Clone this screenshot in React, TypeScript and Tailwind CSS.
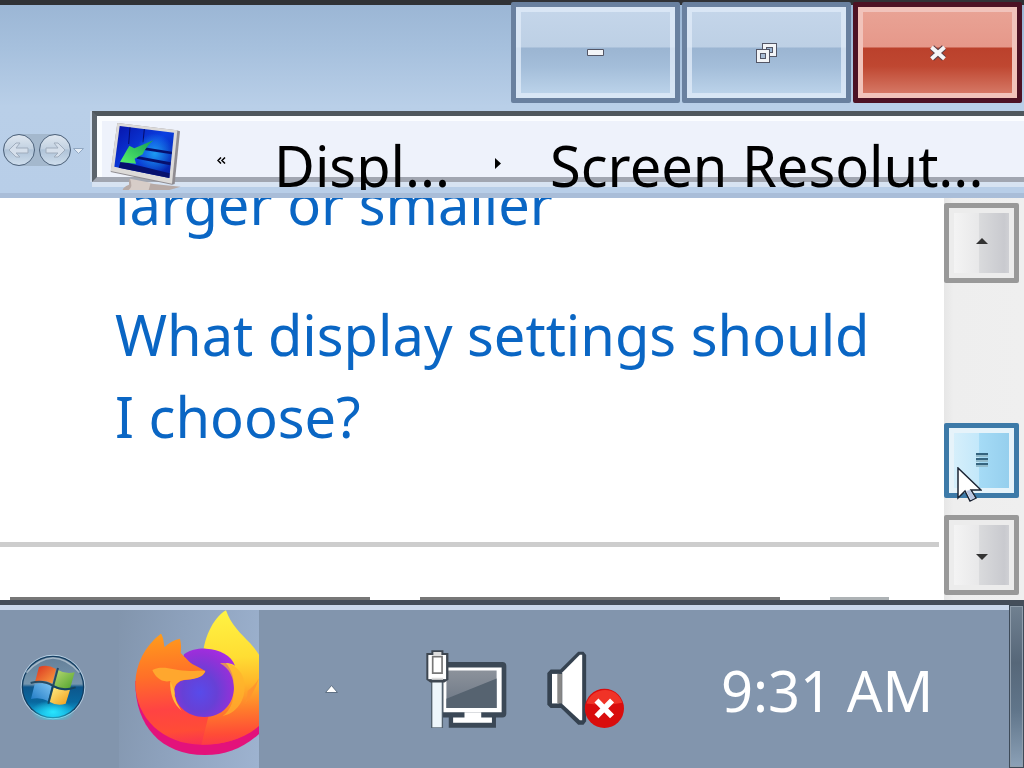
import type { ReactNode } from "react";

function CaptionButton({ label, close, children }: { label: string; close?: boolean; children: ReactNode }) {
  const look = close
    ? "border-[#4d1224] bg-[linear-gradient(#e9a496_0%,#e6988a_44%,#bb412c_45%,#bf4731_65%,#d9806e_100%)] shadow-[inset_0_0_0_5px_#f1c3bb]"
    : "border-[#69809f] bg-[linear-gradient(#c5d6ea_0%,#bdd0e5_44%,#9bb5d2_45%,#a3bdd9_65%,#bfd6ec_100%)] shadow-[inset_0_0_0_5px_rgba(222,234,247,0.8)]";
  return (
    <button
      type="button"
      aria-label={label}
      className={`flex h-[101px] w-[169px] items-center justify-center rounded-[2px] border-[5px] ${look}`}
    >
      {children}
    </button>
  );
}

function ScrollButton({ label, children }: { label: string; children: ReactNode }) {
  return (
    <button
      type="button"
      aria-label={label}
      className="flex h-20 w-[75px] shrink-0 items-center justify-center rounded-[2px] border-[5px] border-[#999] bg-[linear-gradient(90deg,#f6f6f6_0%,#e8e8e9_46%,#d9dadc_47%,#c9cacf_85%,#d6d7da_100%)] shadow-[inset_0_0_0_5px_#ececec]"
    >
      {children}
    </button>
  );
}

function MonitorIcon() {
  return (
    <svg viewBox="328 98 216 204" className="h-[68px] w-[72px] shrink-0" aria-hidden="true">
      <defs>
        <linearGradient id="screen" x1="0" y1="0" x2="1" y2="1">
          <stop offset="0" stopColor="#0712a8" />
          <stop offset="0.5" stopColor="#0a3fe0" />
          <stop offset="1" stopColor="#041c9c" />
        </linearGradient>
        <radialGradient id="glow">
          <stop offset="0" stopColor="#1d9cf2" />
          <stop offset="1" stopColor="#1d9cf2" stopOpacity="0" />
        </radialGradient>
        <linearGradient id="arrow" x1="1" y1="0" x2="0" y2="1">
          <stop offset="0" stopColor="#169a56" />
          <stop offset="1" stopColor="#57f56a" />
        </linearGradient>
      </defs>
      <path d="M385 270l75 14 80 8-34 10H366q0-8 19-16z" fill="#b7aaa6" />
      <path d="M388 268l62 12-6 22h-60q14-10 4-34z" fill="#d7cdc8" />
      <path d="M350 101l178 22 10 3-16 158-8 2-184-38z" fill="#8f8c91" />
      <path d="M350 101l180 22-16 160-184-38z" fill="#dcdad8" />
      <path d="M357 110l163 20-14 136-165-34z" fill="url(#screen)" />
      <path d="M388 114l-4 50M431 119l-4 40" stroke="#050c6c" strokeWidth="3" />
      <ellipse cx="462" cy="192" rx="56" ry="60" fill="url(#glow)" />
      <path d="M430 174l84 13-1 8-98-15zM412 201l98 18-1 9-101-20zM360 216l147 36-1 14-152-31z" fill="#06106e" />
      <path d="M458 153l-57 24-15-8-28 49 48 5-4-15 24-13q8-20 32-42z" fill="url(#arrow)" />
    </svg>
  );
}

function StartOrb() {
  return (
    <svg viewBox="61 186 196 198" className="h-[66px] w-[66px]" aria-hidden="true">
      <defs>
        <linearGradient id="orb" x1="0" y1="0" x2="0" y2="1">
          <stop offset="0" stopColor="#647f98" />
          <stop offset="0.45" stopColor="#7696ae" />
          <stop offset="0.5" stopColor="#0d568c" />
          <stop offset="0.75" stopColor="#08689f" />
          <stop offset="1" stopColor="#12b8ea" />
        </linearGradient>
        <radialGradient id="orbGlow">
          <stop offset="0" stopColor="#28e6ff" />
          <stop offset="1" stopColor="#28e6ff" stopOpacity="0" />
        </radialGradient>
        <linearGradient id="red" x1="0" y1="0" x2="1" y2="1">
          <stop offset="0" stopColor="#d92f20" />
          <stop offset="1" stopColor="#fba441" />
        </linearGradient>
        <linearGradient id="green" x1="0" y1="0" x2="1" y2="1">
          <stop offset="0" stopColor="#b9da74" />
          <stop offset="1" stopColor="#4fa22b" />
        </linearGradient>
        <linearGradient id="blue" x1="1" y1="0" x2="0" y2="1">
          <stop offset="0" stopColor="#7fc4f2" />
          <stop offset="1" stopColor="#1e79c4" />
        </linearGradient>
        <linearGradient id="yellow" x1="0" y1="0" x2="1" y2="1">
          <stop offset="0" stopColor="#fff08a" />
          <stop offset="1" stopColor="#f19b16" />
        </linearGradient>
      </defs>
      <circle cx="159" cy="285" r="97" fill="#b7cfe3" />
      <circle cx="159" cy="285" r="94" fill="#123d61" />
      <circle cx="159" cy="285" r="90" fill="url(#orb)" />
      <ellipse cx="159" cy="360" rx="66" ry="36" fill="url(#orbGlow)" />
      <path d="M79 242q80-88 160 0" fill="none" stroke="#cddbe5" strokeWidth="5" opacity="0.6" />
      <path d="M117 225q24-10 51 6l-11 44q-22-14-52-5z" fill="url(#red)" />
      <path d="M174 234q24 14 50 7l-13 46q-26 8-49-7z" fill="url(#green)" />
      <path d="M104 277q30-8 51 5l-11 45q-24-13-51-6z" fill="url(#blue)" />
      <path d="M160 286q24 13 50 7l-13 42q-26 8-49-6z" fill="url(#yellow)" />
      <path d="M92 273q37-10 66 8t69 5M174 228l-29 107" fill="none" stroke="#173f59" strokeWidth="6" opacity="0.85" />
    </svg>
  );
}

function FirefoxLogo() {
  return (
    <svg viewBox="75 57 372 438" className="h-[146px] w-[124px]" aria-hidden="true">
      <defs>
        <linearGradient id="body" gradientUnits="userSpaceOnUse" x1="200" y1="130" x2="230" y2="470">
          <stop offset="0" stopColor="#ff9a1c" />
          <stop offset="0.35" stopColor="#ff7028" />
          <stop offset="0.65" stopColor="#ff4343" />
          <stop offset="0.85" stopColor="#ff4c36" />
          <stop offset="1" stopColor="#f92d55" />
        </linearGradient>
        <radialGradient id="globe" cx="0.42" cy="0.64" r="0.7">
          <stop offset="0" stopColor="#584bea" />
          <stop offset="0.4" stopColor="#6740d6" />
          <stop offset="0.8" stopColor="#9530d8" />
          <stop offset="1" stopColor="#a82be4" />
        </radialGradient>
        <linearGradient id="flame" gradientUnits="userSpaceOnUse" x1="350" y1="60" x2="370" y2="460">
          <stop offset="0" stopColor="#fff343" />
          <stop offset="0.35" stopColor="#ffdd33" />
          <stop offset="0.55" stopColor="#ffb52a" />
          <stop offset="0.75" stopColor="#ff7a2c" />
          <stop offset="0.92" stopColor="#ff4c36" />
          <stop offset="1" stopColor="#fb3a48" />
        </linearGradient>
      </defs>
      <path d="M76 270C74 400 150 492 285 492c70 0 124-24 180-80V290z" fill="#e3127b" />
      <path d="M153 128C104 164 77 220 76 277c0 104 84 184 198 184 72 0 132-18 190-72V300H200z" fill="url(#body)" />
      <path d="M348 58c14 42 44 70 72 98 20 22 34 44 46 72v160c-50 50-112 73-192 73l20-80 60-160-75-9c-4-54 26-130 69-154z" fill="url(#flame)" />
      <path d="M447 262q-14 44-42 78 8-22 8-40 20-14 34-38z" fill="#ff9130" opacity="0.8" />
      <path d="M222 190c20-14 44-18 66-17 42 2 76 20 87 51-8-5-16-8-28-8 17 18 25 43 25 72 0 53-37 90-89 90-53 0-91-37-91-84 0-28 6-40 20-54z" fill="url(#globe)" />
      <path d="M153 128c8 12 9 26 8 43 14-15 30-24 49-28 4 16 4 30 2 43 14 13 26 29 42 37 12 7 24 11 32 18-6 12-19 17-32 21-22 7-38 2-50 14-14 11-17 29-5 49-28-16-38-70-74-70-20-10-38-70 28-127z" fill="url(#body)" />
      <path d="M127 237c20-10 43-7 65-2 32 7 58 4 94 4-4 15-18 20-34 24-24 5-40 0-53 16-7 9-8 20-3 34-11-12-16-25-15-43-28 6-45-13-54-33z" fill="#ffa72e" />
      <path d="M181 271c-2 38 10 70 34 88-15-22-22-38-22-60z" fill="#ffbd3a" />
      <path d="M330 217c34-5 72 20 74 66 2 46-24 84-66 92 24-18 35-48 34-82-1-32-12-60-42-76z" fill="#ffb42c" opacity="0.7" />
    </svg>
  );
}

function NetworkIcon() {
  return (
    <svg viewBox="77 56 242 236" className="h-[79px] w-[81px]" aria-hidden="true">
      <defs>
        <linearGradient id="lcd" x1="0" y1="0" x2="0" y2="1">
          <stop offset="0" stopColor="#8c929b" />
          <stop offset="1" stopColor="#6b7684" />
        </linearGradient>
      </defs>
      <path d="M126 96q0-4 5-4h174q12 0 12 12v142q0 12-12 12h-19v30H145v-30h-19z" fill="#3b4856" />
      <path d="M129 108h174v134H129z" fill="#fff" />
      <path d="M138 117h150v112H138z" fill="url(#lcd)" />
      <path d="M138 202l150-61v88H138z" fill="#566370" />
      <path d="M192 242h50v16h32v15H158v-15h34z" fill="#fff" />
      <path d="M92 145h36v144H92z" fill="#52606d" />
      <path d="M96 145h28v142H96z" fill="#eef6fb" />
      <path d="M93 57h36v8h15v80l-12 8H90l-12-8V65h15z" fill="#3e4751" />
      <path d="M84 71h53v72H84z" fill="#fff" />
      <path d="M97 76h28v49H97z" fill="#fff" stroke="#777" strokeWidth="5" />
      <path d="M99 62h24v11H99zM94 139h34v6H94z" fill="#dedede" />
    </svg>
  );
}

function VolumeMutedIcon() {
  return (
    <svg viewBox="438 61 232 238" className="h-[79px] w-[77px]" aria-hidden="true">
      <path d="M439 130l10-10h29l54-54h16l8 10v200l-8 10h-16l-52-50h-31l-10-10z" fill="#354250" />
      <path d="M453 133h20v89h-20z" fill="#fff" />
      <path d="M469 133h14v89h-14z" fill="#888" />
      <path d="M484 129l53-54h7v198h-7l-53-49z" fill="#fff" />
      <circle cx="611" cy="237" r="59" fill="#d90d0d" />
      <path d="M557 222c15-50 90-58 108-2l-52 8z" fill="#ff4c38" opacity="0.6" />
      <path d="M587 213l47 48M634 213l-47 48" stroke="#fff" strokeWidth="17" />
    </svg>
  );
}

export default function App() {
  return (
    <div className="flex h-screen min-h-[600px] flex-col overflow-hidden bg-white font-['Noto_Sans','Open_Sans',sans-serif] text-[56px] leading-[82px]">
      {/* Window frame */}
      <header className="relative z-10 shrink-0 border-b-[5px] border-[#a9bdd8] bg-[linear-gradient(#9ab5d4_0%,#a6c0dd_25%,#b9cfe8_55%,#b8cee8_100%)]">
        <div className="h-[5px] bg-[#303236]" />
        <div className="-mt-[3px] flex justify-end gap-[2px] pr-[2px]">
          <CaptionButton label="Minimize">
            <svg viewBox="0 0 17 7" className="h-[7px] w-[17px]" aria-hidden="true">
              <path d="M.5.5h16v6H.5z" fill="#f2f4f7" stroke="#535666" />
            </svg>
          </CaptionButton>
          <CaptionButton label="Restore Down">
            <svg viewBox="0 0 21 20" className="h-5 w-[21px]" fill="none" aria-hidden="true">
              <path d="M8.500 2.500h10v9h-10z" stroke="#535666" strokeWidth="5" />
              <path d="M8.500 2.500h10v9h-10z" stroke="#f2f4f7" strokeWidth="3" />
              <path d="M2.500 8.500h9v9h-9z" fill="#a9bdd5" stroke="#535666" strokeWidth="5" />
              <path d="M2.500 8.500h9v9h-9z" stroke="#f2f4f7" strokeWidth="3" />
            </svg>
          </CaptionButton>
          <CaptionButton label="Close" close>
            <svg viewBox="0 0 18 16" className="h-4 w-[18px]" fill="none" aria-hidden="true">
              <path d="M3 2.500l12 11M15 2.500l-12 11" stroke="#5d4149" strokeWidth="6" />
              <path d="M4 3.500l10 9M14 3.500l-10 9" stroke="#f5f5f7" strokeWidth="4" strokeLinecap="square" />
            </svg>
          </CaptionButton>
        </div>

        <div className="flex h-[90px] pt-2">
          <div className="flex w-[92px] shrink-0 items-start pt-[23px] pl-[3px]">
            <div className="flex gap-1 rounded-full bg-[#a4b8cd]">
              {["Back", "Forward"].map((label) => (
                <button
                  key={label}
                  type="button"
                  aria-label={label}
                  className="flex size-8 items-center justify-center rounded-full border border-[#4e637c] bg-[linear-gradient(#dfe7f0_0%,#c3d2e2_45%,#afc3d8_50%,#cfdeed_100%)]"
                >
                  <svg viewBox="0 0 22 18" className={`h-[18px] w-[22px] ${label === "Forward" ? "-scale-x-100" : ""}`} aria-hidden="true">
                    <path d="M1 9l7-7h4L8 7h12v5H8l4 4H8z" fill="#d5dfeb" stroke="#a0adbd" />
                  </svg>
                </button>
              ))}
            </div>
            <button type="button" aria-label="Recent pages" className="mt-[14px] ml-[2px]">
              <svg viewBox="0 0 11 6" className="h-[6px] w-[11px]" aria-hidden="true">
                <path d="M.5.5h10l-5 5z" fill="#e4edf7" stroke="#92a8c2" />
              </svg>
            </button>
          </div>

          <div className="h-[71px] min-w-0 flex-1 border-y-[5px] border-l-[5px] border-t-[#50585e] border-b-[#a1a6b1] border-l-[#5c646c] bg-[#eef2fb] shadow-[inset_5px_5px_0_#fbfdff,0_5px_0_#d7e3f2,-2px_0_0_#cedced]">
            <nav aria-label="Address" className="flex h-[74px] overflow-hidden whitespace-nowrap text-black">
              <div className="w-[177px] shrink-0 pt-[6px] pl-[13px]">
                <div className="flex items-center">
                  <MonitorIcon />
                  <button type="button" aria-label="Previous locations" className="ml-[35px] pt-2">
                    <svg viewBox="0 0 9 7" className="h-[7px] w-[9px]" aria-hidden="true">
                      <path d="M4 .5l-3 3 3 3M8 .5l-3 3 3 3" fill="none" stroke="#000" strokeWidth="1.5" />
                    </svg>
                  </button>
                </div>
              </div>
              <a href="#display" className="w-[221px] shrink-0 pt-2">
                Displ...
              </a>
              <svg viewBox="0 0 6 11" className="mt-[42px] h-[11px] w-[6px] shrink-0" aria-hidden="true">
                <path d="M0 0l6 5.500L0 11z" />
              </svg>
              <a href="#resolution" className="ml-[49px] pt-2">
                Screen Resolut...
              </a>
            </nav>
          </div>
        </div>
      </header>

      <main className="flex min-h-0 flex-1">
        <div className="min-w-0 flex-1 overflow-hidden pr-[5px] text-[#0a66c4]">
          <a href="#text-size" className="-mt-9 block pl-[115px]">
            larger or smaller
          </a>
          <a href="#settings" className="mt-[49px] block max-w-[900px] pl-[115px]">
            What display settings should I&nbsp;choose?
          </a>
          <div className="mt-[85px] h-[5px] bg-[#cdcdcd]" />
          <div className="mt-[50px] flex gap-[50px] pl-[10px]">
            <button type="button" aria-label="OK" className="h-[75px] w-[360px] shrink-0 border-[5px] border-[#777]" />
            <button type="button" aria-label="Cancel" className="h-[75px] w-[360px] shrink-0 border-[5px] border-[#777]" />
            <button type="button" aria-label="Apply" className="h-[75px] w-[59px] shrink-0 border-[5px] border-[#adb2b5]" />
          </div>
        </div>

        <div className="flex w-20 shrink-0 flex-col bg-[linear-gradient(90deg,#e6e6e6,#eee_12%,#efefef)] py-[5px]">
          <ScrollButton label="Scroll up">
            <svg viewBox="0 0 12 6" className="mb-1 h-[6px] w-3" aria-hidden="true">
              <path d="M0 6l6-6 6 6z" fill="#333" />
            </svg>
          </ScrollButton>
          <div className="flex-1" />
          <div className="relative mb-[17px]">
            <button
              type="button"
              aria-label="Scroll position"
              className="flex h-[75px] w-[75px] items-center justify-center rounded-[2px] border-[5px] border-[#3d7aa8] bg-[linear-gradient(90deg,#d9f0fb_0%,#c3e8fa_46%,#a5dbf6_47%,#93cdec_100%)] shadow-[inset_0_0_0_5px_#e6f3fa]"
            >
              <svg viewBox="0 0 12 16" className="h-4 w-3" aria-hidden="true">
                <path d="M0 1h12M0 6h12M0 11h12" stroke="#35647f" strokeWidth="2" />
                <path d="M0 3h12M0 8h12M0 13h12" stroke="#93bccd" strokeWidth="2" />
              </svg>
            </button>
            <svg viewBox="0 0 25 36" className="absolute top-[44px] left-[13px] h-9 w-[25px]" aria-hidden="true">
              <path d="M1 1v30l7-7 5 10 6-3-5-8h10z" fill="#fff" stroke="#1c2433" strokeWidth="1.5" />
              <path d="M9 24l5 9 4-2-5-8z" fill="#b9c6e2" />
            </svg>
          </div>
          <ScrollButton label="Scroll down">
            <svg viewBox="0 0 12 6" className="mt-1 h-[6px] w-3" aria-hidden="true">
              <path d="M0 0h12L6 6z" fill="#333" />
            </svg>
          </ScrollButton>
        </div>
      </main>

      {/* Taskbar */}
      <footer className="flex h-[168px] shrink-0 border-t-[5px] border-[#444e5a] bg-[#8295ad] shadow-[inset_0_5px_0_#c9d8eb]">
        <button type="button" aria-label="Start" className="ml-5 self-center">
          <StartOrb />
        </button>
        <button
          type="button"
          aria-label="Firefox"
          className="mt-[5px] ml-[33px] flex w-[140px] items-start justify-end bg-[linear-gradient(100deg,#8295ad_0%,#8da1bc_40%,#9eb3d0_100%)]"
        >
          <FirefoxLogo />
        </button>
        <button type="button" aria-label="Show hidden icons" className="ml-[66px] self-center pt-1">
          <svg viewBox="0 0 13 8" className="h-2 w-[13px]" aria-hidden="true">
            <path d="M.5 7.500l6-7 6 7z" fill="#fff" stroke="#5f7084" />
          </svg>
        </button>
        <div className="ml-auto flex items-center gap-10 pt-[5px]">
          <button type="button" aria-label="Network">
            <NetworkIcon />
          </button>
          <button type="button" aria-label="Volume, muted">
            <VolumeMutedIcon />
          </button>
        </div>
        <time className="ml-[97px] w-[288px] self-center pt-[7px] whitespace-nowrap text-white">9:31 AM</time>
        <button
          type="button"
          aria-label="Show desktop"
          className="w-[15px] border-2 border-[#909eac] bg-[linear-gradient(#708090_0%,#566779_35%,#60758a_65%,#8ba0b6_100%)] outline-1 -outline-offset-1 outline-[#3e4b59]"
        />
      </footer>
    </div>
  );
}
